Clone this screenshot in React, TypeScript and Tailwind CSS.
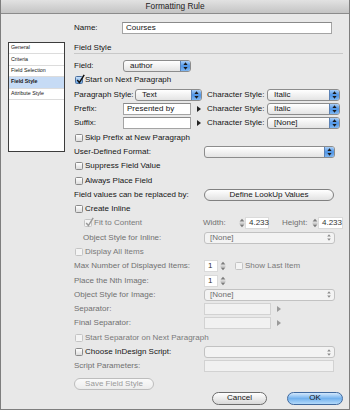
import React from 'react';

const BlueArrows = () => (
  <svg width="5" height="8" viewBox="0 0 5 8">
    <path d="M2.5 0.3 L4.6 3 H0.4 Z M0.4 5 H4.6 L2.5 7.7 Z" fill="#1b1b1b" />
  </svg>
);

const GrayArrows = () => (
  <svg width="4" height="7" viewBox="0 0 4 7">
    <path d="M2 0.3 L3.8 2.6 H0.2 Z M0.2 4.4 H3.8 L2 6.7 Z" fill="#8a8a8a" />
  </svg>
);

const Stepper = () => (
  <svg width="6" height="10" viewBox="0 0 6 10">
    <path d="M3 0.8 L5.4 3.6 H0.6 Z M0.6 6.4 H5.4 L3 9.2 Z" fill="#7c7c7c" />
    <rect x="0.5" y="4.8" width="5" height="0.6" fill="#a0a0a0" />
  </svg>
);

const Tri = ({ gray = false }: { gray?: boolean }) => (
  <svg width="4" height="6" viewBox="0 0 4 6">
    <path d="M0 0 L4 3 L0 6 Z" fill={gray ? '#9a9a9a' : '#222'} />
  </svg>
);

function Select({ value = '', w, disabled = false }: { value?: string; w: string; disabled?: boolean }) {
  if (disabled) {
    return (
      <div className={`${w} h-[12px] flex items-center rounded-[3px] border border-[#c2c2c2] bg-[#f3f3f3] pl-[5px] pr-[3px] text-[#6e6e6e]`}>
        <span className="flex-1 leading-[10px]">{value}</span>
        <GrayArrows />
      </div>
    );
  }
  return (
    <div className={`${w} h-[12px] flex rounded-[3px] border border-[#8c8c8c] bg-linear-to-b from-white to-[#e4e4e4] overflow-hidden`}>
      <span className="flex-1 pl-[6px] leading-[10px] text-[#151515]">{value}</span>
      <span className="w-[10px] flex items-center justify-center border-l border-[#5c82b4] bg-linear-to-b from-[#a9cef6] via-[#4f95e6] to-[#7fb6f0]">
        <BlueArrows />
      </span>
    </div>
  );
}

function Input({ value = '', w, disabled = false, soft = false }: { value?: string; w: string; disabled?: boolean; soft?: boolean }) {
  const look = disabled
    ? 'bg-[#f1f1f1] border-[#d2d2d2] text-[#777]'
    : soft
    ? 'bg-white border-[#dadada] text-[#333]'
    : 'bg-white border-[#a4a4a4] border-t-[#8a8a8a] text-[#151515]';
  return <div className={`${w} h-[12px] flex items-center pl-[3px] leading-[10px] border ${look}`}>{value}</div>;
}

function Check({ checked = false, disabled = false }: { checked?: boolean; disabled?: boolean }) {
  return (
    <span
      className={`relative shrink-0 w-[8px] h-[8px] rounded-[1.5px] border ${
        disabled
          ? 'border-[#c4c4c4] bg-[#f4f4f4]'
          : checked
          ? 'border-[#4a6f9e] bg-linear-to-b from-[#c9e0f8] to-[#6aa6e6]'
          : 'border-[#8a8a8a] bg-linear-to-b from-white to-[#dcdcdc]'
      }`}
    >
      {checked && (
        <svg className="absolute left-[0px] top-[-3px]" width="9" height="10" viewBox="0 0 9 10">
          <path d="M1.2 6 L3.4 8.6 L8.2 0.8" fill="none" stroke={disabled ? '#9a9a9a' : '#111'} strokeWidth="1.5" />
        </svg>
      )}
    </span>
  );
}

function CheckLabel({ label, checked = false, disabled = false }: { label: string; checked?: boolean; disabled?: boolean }) {
  return (
    <div className="flex items-center gap-[2px] ml-[1px]">
      <Check checked={checked} disabled={disabled} />
      <span className={disabled ? 'text-[#7a7a7a]' : 'text-[#151515]'}>{label}</span>
    </div>
  );
}

const Row = ({ children }: { children: React.ReactNode }) => <div className="h-[14.3px] flex items-center">{children}</div>;

const Label = ({ w, children, gray = false }: { w: string; children: React.ReactNode; gray?: boolean }) => (
  <span className={`${w} shrink-0 ${gray ? 'text-[#707070]' : 'text-[#151515]'}`}>{children}</span>
);

const nav = ['General', 'Criteria', 'Field Selection', 'Field Style', 'Attribute Style'];

export default function App() {
  return (
    <div className="w-[350px] h-[410px] flex flex-col bg-[#e8e8e8] border-x border-b border-[#7e7e7e] font-['Liberation_Sans',Arial,sans-serif] text-[8px] text-[#151515] overflow-hidden">
      <div className="h-[14px] shrink-0 flex items-center justify-center border-b border-[#8b8b8b] bg-linear-to-b from-[#e2e2e2] to-[#c4c4c4] text-[8.3px] text-[#222]">
        Formatting Rule
      </div>

      <div className="flex pl-[7px]">
        <div className="mt-[28px] w-[57px] h-[110px] shrink-0 border border-[#3c3c3c] bg-white text-[5.3px]">
          {nav.map((n) => (
            <div
              key={n}
              className={`h-[11.4px] flex items-center pl-[2px] border-b border-[#dcdcdc] ${
                n === 'Field Style' ? 'bg-[#c6dbf5] font-bold' : ''
              }`}
            >
              {n}
            </div>
          ))}
        </div>

        <div className="ml-[9px] w-[271px] flex flex-col">
          <div className="mt-[8px] h-[12px] flex items-center">
            <Label w="w-[48px]">Name:</Label>
            <Input w="w-[210px]" value="Courses" />
          </div>

          <div className="mt-[9px] h-[11px] flex items-center border-b border-[#c8c8c8] mr-[2px]">Field Style</div>

          <div className="mt-[5px] flex flex-col">
            <Row>
              <Label w="w-[49px]">Field:</Label>
              <Select w="w-[68px]" value="author" />
            </Row>
            <Row>
              <CheckLabel checked label="Start on Next Paragraph" />
            </Row>
            <Row>
              <Label w="w-[61px]">Paragraph Style:</Label>
              <Select w="w-[67px]" value="Text" />
              <Label w="w-[60px] ml-[5px]">Character Style:</Label>
              <Select w="w-[73px]" value="Italic" />
            </Row>
            <Row>
              <Label w="w-[49px]">Prefix:</Label>
              <Input w="w-[68px]" value="Presented by" />
              <span className="w-[16px] flex justify-center"><Tri /></span>
              <Label w="w-[60px]">Character Style:</Label>
              <Select w="w-[73px]" value="Italic" />
            </Row>
            <Row>
              <Label w="w-[49px]">Suffix:</Label>
              <Input w="w-[68px]" />
              <span className="w-[16px] flex justify-center"><Tri /></span>
              <Label w="w-[60px]">Character Style:</Label>
              <Select w="w-[73px]" value="[None]" />
            </Row>
            <Row>
              <CheckLabel label="Skip Prefix at New Paragraph" />
            </Row>
            <Row>
              <Label w="w-[130px]">User-Defined Format:</Label>
              <Select w="w-[131px]" />
            </Row>
            <Row>
              <CheckLabel label="Suppress Field Value" />
            </Row>
            <Row>
              <CheckLabel label="Always Place Field" />
            </Row>
            <Row>
              <Label w="w-[130px]">Field values can be replaced by:</Label>
              <div className="w-[130px] h-[12px] flex items-center justify-center rounded-full border border-[#808080] bg-linear-to-b from-white to-[#e2e2e2]">
                Define LookUp Values
              </div>
            </Row>
            <Row>
              <CheckLabel label="Create Inline" />
            </Row>
            <Row>
              <div className="w-[129px] shrink-0 pl-[9px]">
                <CheckLabel checked disabled label="Fit to Content" />
              </div>
              <Label w="w-[35px]" gray>Width:</Label>
              <span className="w-[7px] flex justify-center"><Stepper /></span>
              <Input w="w-[24px]" value="4.233" soft />
              <Label w="w-[30px] ml-[13px]" gray>Height:</Label>
              <span className="w-[6px] flex justify-center"><Stepper /></span>
              <Input w="w-[25px]" value="4.233" soft />
            </Row>
            <Row>
              <Label w="w-[130px] pl-[9px]" gray>Object Style for Inline:</Label>
              <Select w="w-[131px]" value="[None]" disabled />
            </Row>
            <Row>
              <CheckLabel disabled label="Display All Items" />
            </Row>
            <Row>
              <Label w="w-[130px]" gray>Max Number of Displayed Items:</Label>
              <Input w="w-[14px]" value="1" soft />
              <span className="w-[9px] flex justify-center"><Stepper /></span>
              <span className="ml-[7px]">
                <CheckLabel disabled label="Show Last Item" />
              </span>
            </Row>
            <Row>
              <Label w="w-[130px]" gray>Place the Nth Image:</Label>
              <Input w="w-[14px]" value="1" soft />
              <span className="w-[9px] flex justify-center"><Stepper /></span>
            </Row>
            <Row>
              <Label w="w-[130px]" gray>Object Style for Image:</Label>
              <Select w="w-[131px]" value="[None]" disabled />
            </Row>
            <Row>
              <Label w="w-[130px]" gray>Separator:</Label>
              <Input w="w-[67px]" disabled />
              <span className="ml-[6px]"><Tri gray /></span>
            </Row>
            <Row>
              <Label w="w-[130px]" gray>Final Separator:</Label>
              <Input w="w-[67px]" disabled />
              <span className="ml-[6px]"><Tri gray /></span>
            </Row>
            <Row>
              <CheckLabel disabled label="Start Separator on Next Paragraph" />
            </Row>
            <Row>
              <div className="w-[130px] shrink-0">
                <CheckLabel label="Choose InDesign Script:" />
              </div>
              <Select w="w-[131px]" disabled />
            </Row>
            <Row>
              <Label w="w-[130px]" gray>Script Parameters:</Label>
              <Input w="w-[130px]" disabled />
            </Row>
          </div>

          <div className="mt-[4px] w-[80px] h-[12px] flex items-center justify-center rounded-full border border-[#bdbdbd] bg-linear-to-b from-[#fafafa] to-[#ececec] text-[#9a9a9a]">
            Save Field Style
          </div>

          <div className="mt-[2px] flex justify-end gap-[20px] pr-[2px]">
            <div className="w-[55px] h-[13px] flex items-center justify-center rounded-full border border-[#6c6c6c] bg-linear-to-b from-white to-[#d8d8d8]">
              Cancel
            </div>
            <div className="w-[56px] h-[13px] flex items-center justify-center rounded-full border border-[#40699e] bg-linear-to-b from-[#d3e8fc] via-[#73b2ee] to-[#b2d9fa]">
              OK
            </div>
          </div>
        </div>
      </div>
    </div>
  );
}
